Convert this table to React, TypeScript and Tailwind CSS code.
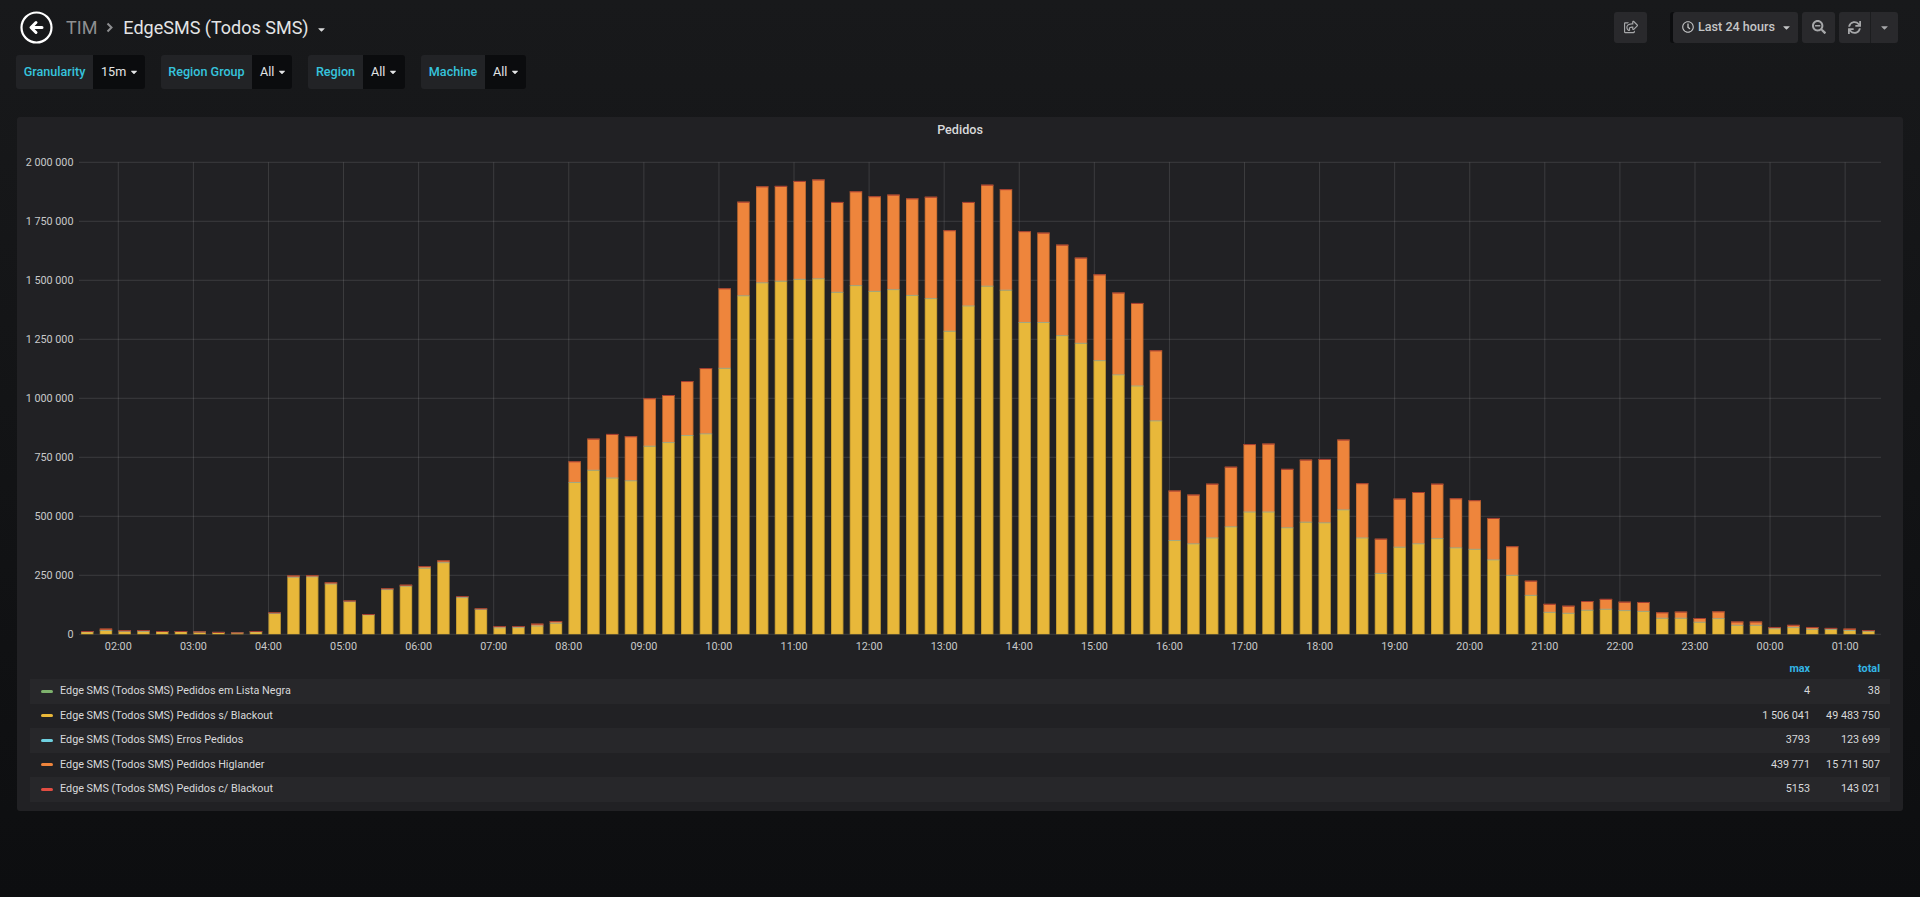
import { FaRegShareSquare, FaRegClock, FaSearchMinus, FaSync, FaCaretDown } from "react-icons/fa";

// values in thousands, one bar per 15 minutes starting 01:30
const TOTAL = [
  14, 24, 17, 18, 14, 14, 12, 10, 8, 14, 93, 249, 250, 220, 143, 86, 195, 210, 289, 313, 162, 110, 35, 35,
  45, 56, 733, 829, 849, 839, 1000, 1014, 1073, 1128, 1466, 1833, 1898, 1900, 1921, 1927, 1832, 1877, 1856, 1863,
  1847, 1854, 1712, 1832, 1905, 1886, 1708, 1702, 1651, 1596, 1525, 1448, 1404, 1203, 609, 592, 638, 710, 806, 808,
  701, 740, 743, 825, 640, 405, 575, 603, 638, 576, 568, 493, 373, 227, 129, 121, 141, 150, 138, 137, 93, 96, 69,
  97, 54, 54, 31, 40, 31, 27, 24, 18,
];
const YELLOW = [
  10, 16, 12, 12, 11, 11, 9, 8, 6, 10, 88, 242, 243, 213, 138, 82, 189, 204, 280, 303, 155, 105, 27, 28, 35, 47,
  643, 695, 662, 650, 797, 812, 842, 849, 1127, 1434, 1489, 1496, 1504, 1506, 1449, 1477, 1453, 1460, 1436, 1422,
  1284, 1391, 1475, 1458, 1321, 1321, 1265, 1233, 1159, 1099, 1052, 904, 397, 383, 408, 455, 518, 518, 451, 475,
  472, 527, 408, 258, 369, 383, 405, 366, 360, 315, 250, 165, 93, 89, 102, 106, 100, 97, 68, 68, 51, 66, 38, 38,
  23, 28, 21, 21, 16, 13,
];

const BASE = 490.3;
const SCALE = 472 / 2000;
const HOURS = ["02:00", "03:00", "04:00", "05:00", "06:00", "07:00", "08:00", "09:00", "10:00", "11:00", "12:00", "13:00", "14:00", "15:00", "16:00", "17:00", "18:00", "19:00", "20:00", "21:00", "22:00", "23:00", "00:00", "01:00"];
const YLABELS = ["0", "250 000", "500 000", "750 000", "1 000 000", "1 250 000", "1 500 000", "1 750 000", "2 000 000"];

const LEGEND = [
  { name: "Edge SMS (Todos SMS) Pedidos em Lista Negra", color: "#7EB26D", max: "4", total: "38" },
  { name: "Edge SMS (Todos SMS) Pedidos s/ Blackout", color: "#EAB839", max: "1 506 041", total: "49 483 750" },
  { name: "Edge SMS (Todos SMS) Erros Pedidos", color: "#6ED0E0", max: "3793", total: "123 699" },
  { name: "Edge SMS (Todos SMS) Pedidos Higlander", color: "#EF843C", max: "439 771", total: "15 711 507" },
  { name: "Edge SMS (Todos SMS) Pedidos c/ Blackout", color: "#E24D42", max: "5153", total: "143 021" },
];

const FILTERS = [
  { label: "Granularity", value: "15m", lw: "w-[77px]", vw: "w-[52px]" },
  { label: "Region Group", value: "All", lw: "w-[91px]", vw: "w-[40px]" },
  { label: "Region", value: "All", lw: "w-[55px]", vw: "w-[42px]" },
  { label: "Machine", value: "All", lw: "w-[64px]", vw: "w-[41px]" },
];

function Chart() {
  return (
    <svg width={1886} height={515} className="block font-['Roboto']">
      {YLABELS.map((l, k) => (
        <g key={l}>
          <line x1={62} x2={1864} y1={BASE - k * 59} y2={BASE - k * 59} stroke="#ffffff" strokeOpacity={0.12} />
          <text x={56.5} y={BASE - k * 59 + 4} textAnchor="end" fontSize={10.8} fill="#c8c9ca">
            {l}
          </text>
        </g>
      ))}
      {HOURS.map((h, k) => (
        <g key={h}>
          <line x1={101.3 + k * 75.08} x2={101.3 + k * 75.08} y1={18.3} y2={BASE} stroke="#ffffff" strokeOpacity={0.12} />
          <text x={101.3 + k * 75.08} y={506} textAnchor="middle" fontSize={10.8} fill="#c8c9ca">
            {h}
          </text>
        </g>
      ))}
      {TOTAL.map((t, i) => {
        const x = 64 + i * 18.75;
        const yH = YELLOW[i] * SCALE;
        const tH = t * SCALE;
        return (
          <g key={i}>
            <rect x={x} y={BASE - yH} width={12.4} height={yH} fill="#E8B83A" />
            <rect x={x} y={BASE - tH} width={12.4} height={tH - yH} fill="#EE853C" />
            <rect x={x} y={BASE - yH - 0.5} width={12.4} height={0.9} fill="#9fb08c" />
            <rect x={x} y={BASE - tH} width={12.4} height={1} fill="#c2483a" />
            <rect x={x + 0.4} y={BASE - tH + 0.4} width={11.6} height={tH - 0.4} fill="none" stroke="#000" strokeOpacity={0.2} strokeWidth={0.8} />
          </g>
        );
      })}
    </svg>
  );
}

function Legend() {
  return (
    <div className="mx-[13px] text-[10.8px] text-[#d8d9da]">
      <div className="flex h-[20px] items-center justify-end font-bold text-[#33b5e5]">
        <span className="w-[80px] text-right">max</span>
        <span className="w-[80px] pr-[10px] text-right">total</span>
      </div>
      {LEGEND.map((s, i) => (
        <div key={s.name} className={`flex h-[24.5px] items-center ${i % 2 === 0 ? "bg-[#27272a]" : ""}`}>
          <span className="ml-[11px] mr-[7px] h-[3px] w-[12px] rounded-[2px]" style={{ backgroundColor: s.color }} />
          <span className="flex-1">{s.name}</span>
          <span className="w-[80px] text-right">{s.max}</span>
          <span className="w-[80px] pr-[10px] text-right">{s.total}</span>
        </div>
      ))}
    </div>
  );
}

export default function App() {
  return (
    <div className="min-h-screen w-full bg-gradient-to-b from-[#18191b] to-[#0d0e10] font-['Roboto'] text-[#d8d9da]">
      <header className="flex h-[54px] items-center justify-between pl-[20px] pr-[22px]">
        <div className="flex items-center">
          <svg width={33} height={33} viewBox="0 0 33 33">
            <circle cx={16.5} cy={16.5} r={15} fill="none" stroke="#ffffff" strokeWidth={2.2} />
            <path d="M22 16.5H11.5M16 11.5L11 16.5L16 21.5" fill="none" stroke="#ffffff" strokeWidth={3} strokeLinecap="round" strokeLinejoin="round" />
          </svg>
          <span className="ml-[13px] text-[18px] text-[#8e8f91]">TIM</span>
          <svg width={7} height={11} viewBox="0 0 7 11" className="ml-[9px]">
            <path d="M1.5 1.5L5.5 5.5L1.5 9.5" fill="none" stroke="#8e8f91" strokeWidth={2} />
          </svg>
          <span className="ml-[10px] text-[18px] text-[#e3e4e5]">EdgeSMS (Todos SMS)</span>
          <FaCaretDown className="ml-[7px] mt-[4px] text-[11px] text-[#d8d9da]" />
        </div>
        <div className="flex items-center text-[#a6a7a9]">
          <button className="flex h-[31px] w-[33px] items-center justify-center rounded-[3px] bg-[#29292c]">
            <FaRegShareSquare className="text-[14px]" />
          </button>
          <button className="ml-[26px] flex h-[31px] w-[125px] items-center gap-[4px] rounded-[3px] bg-[#29292c] pl-[9px] text-[12.6px] font-medium text-[#c4c5c6] shadow-[-3px_0_0_#0c0d0f]">
            <FaRegClock className="text-[12px]" />
            <span>Last 24 hours</span>
            <FaCaretDown className="ml-[2px] text-[11px]" />
          </button>
          <button className="ml-[4px] flex h-[31px] w-[33px] items-center justify-center rounded-[3px] bg-[#29292c]">
            <FaSearchMinus className="text-[14px]" />
          </button>
          <div className="ml-[4px] flex h-[31px] rounded-[3px] bg-[#29292c]">
            <div className="flex w-[32px] items-center justify-center border-r border-[#1c1d1f]">
              <FaSync className="text-[13px]" />
            </div>
            <div className="flex w-[27px] items-center justify-center">
              <FaCaretDown className="text-[11px]" />
            </div>
          </div>
        </div>
      </header>

      <div className="ml-[16px] mt-[1px] flex h-[34px] gap-[16px]">
        {FILTERS.map((f) => (
          <div key={f.label} className="flex overflow-hidden rounded-[3px]">
            <div className={`flex ${f.lw} items-center justify-center bg-[#222326] text-[12.6px] font-medium text-[#36c3dd]`}>
              {f.label}
            </div>
            <div className={`flex ${f.vw} items-center bg-[#0b0c0e] pl-[8px] text-[12.6px] text-[#e3e4e5]`}>
              <span>{f.value}</span>
              <FaCaretDown className="ml-[3px] text-[10px]" />
            </div>
          </div>
        ))}
      </div>

      <div className="ml-[17px] mt-[28px] h-[694px] w-[1886px] rounded-[3px] bg-[#212124]">
        <div className="flex h-[27px] items-center justify-center text-[12.6px] font-medium text-[#d8d9da]">Pedidos</div>
        <Chart />
        <Legend />
      </div>
    </div>
  );
}
